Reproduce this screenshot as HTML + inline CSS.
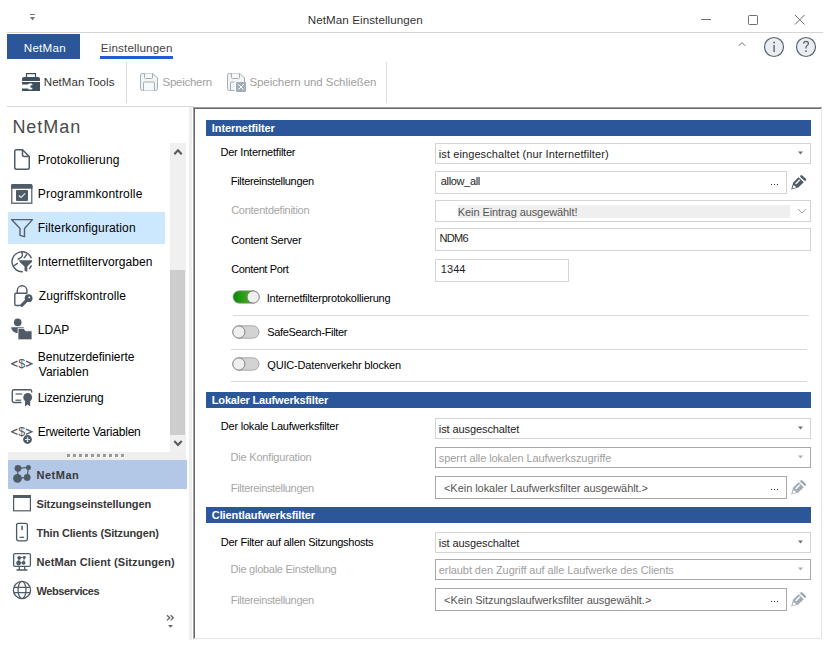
<!DOCTYPE html>
<html><head><meta charset="utf-8"><title>NetMan Einstellungen</title>
<style>
html,body{margin:0;padding:0;}
body{width:828px;height:647px;position:relative;overflow:hidden;background:#fff;font-family:"Liberation Sans", sans-serif;}
</style></head><body>
<svg style="position:absolute;left:29px;top:13px;" width="8" height="9" viewBox="0 0 8 9"><rect x="1" y="1" width="5" height="1" fill="#777"/><path d="M1 4 H6 L3.5 7.5 Z" fill="#777"/></svg>
<div style="position:absolute;left:307.80px;top:14px;font-size:11.6px;line-height:11.6px;font-weight:400;color:#333;letter-spacing:0.084px;white-space:nowrap;">NetMan Einstellungen</div>
<div style="position:absolute;left:701px;top:19px;width:10px;height:1px;background:#707070;"></div>
<svg style="position:absolute;left:747px;top:14px;" width="12" height="12" viewBox="0 0 12 12"><rect x="1.5" y="1.5" width="9" height="9" rx="0.8" fill="none" stroke="#707070" stroke-width="1"/></svg>
<svg style="position:absolute;left:794px;top:14px;" width="12" height="12" viewBox="0 0 12 12"><path d="M1 1 L10.5 10.5 M10.5 1 L1 10.5" stroke="#707070" stroke-width="1"/></svg>
<div style="position:absolute;left:7px;top:32px;width:816px;height:1px;background:#d5d5d5;"></div>
<div style="position:absolute;left:7px;top:34px;width:73px;height:25px;background:#2b579a;"></div>
<div style="position:absolute;left:23.80px;top:42px;font-size:11.6px;line-height:11.6px;font-weight:400;color:#fff;letter-spacing:0.240px;white-space:nowrap;">NetMan</div>
<div style="position:absolute;left:100.80px;top:42px;font-size:11.6px;line-height:11.6px;font-weight:400;color:#444;letter-spacing:0.167px;white-space:nowrap;">Einstellungen</div>
<div style="position:absolute;left:100px;top:56px;width:73px;height:3px;background:#1f5fcc;"></div>
<svg style="position:absolute;left:736px;top:40px;" width="12" height="8" viewBox="0 0 12 8"><path d="M2.8 5.8 L6 2.6 L9.2 5.8" fill="none" stroke="#707070" stroke-width="1"/></svg>
<svg style="position:absolute;left:763px;top:36px;" width="22" height="22" viewBox="0 0 22 22"><circle cx="11" cy="11" r="9.5" fill="#e9edf1" stroke="#5a6470" stroke-width="1.2"/><rect x="10.4" y="9" width="1.4" height="7" fill="#5a6470"/><circle cx="11.1" cy="6.5" r="0.9" fill="#5a6470"/></svg>
<svg style="position:absolute;left:795px;top:36px;" width="22" height="22" viewBox="0 0 22 22"><circle cx="11" cy="11" r="9.5" fill="#e9edf1" stroke="#5a6470" stroke-width="1.2"/><path d="M8.6 7.6 Q8.8 5.4 11 5.4 Q13.4 5.4 13.4 7.6 Q13.4 9 11.9 9.8 Q11 10.4 11 11.6 V12.6" fill="none" stroke="#5a6470" stroke-width="1.3"/><circle cx="11" cy="15.2" r="0.9" fill="#5a6470"/></svg>
<svg style="position:absolute;left:22px;top:73px;" width="18" height="18" viewBox="0 0 18 18"><path d="M4.5 4.5 V0.6 H13.5 V4.5" fill="none" stroke="#3d505c" stroke-width="1.2"/><path d="M0 8 V6 Q0 4 2 4 H16 Q18 4 18 6 V8 Z" fill="#3d505c"/><path d="M0 9 H18 V18 H0 V15.5 H5 Q6.5 15.5 7 16.5 H9.2 Q10.5 16.5 10.5 15 V14.7 H8.5 V12.3 H10.5 V12 Q10.5 10.5 9.2 10.5 H7 Q6.5 11.5 5 11.5 H0 Z" fill="#3d505c"/></svg>
<div style="position:absolute;left:43.80px;top:77px;font-size:11.5px;line-height:11.5px;font-weight:400;color:#333;letter-spacing:0.045px;white-space:nowrap;">NetMan Tools</div>
<div style="position:absolute;left:126px;top:62px;width:1px;height:41px;background:#dcdcdc;"></div>
<svg style="position:absolute;left:140px;top:73px;" width="18" height="18" viewBox="0 0 18 18"><path d="M0.5 2.5 Q0.5 0.5 2.5 0.5 H13 L17.5 5 V15.5 Q17.5 17.5 15.5 17.5 H2.5 Q0.5 17.5 0.5 15.5 Z" fill="#f3f4f5" stroke="#a3adb4" stroke-width="1"/><path d="M4.5 0.5 V4.5 Q4.5 5.5 5.5 5.5 H11.5 Q12.5 5.5 12.5 4.5 V0.5" fill="#f7f8f9" stroke="#a3adb4" stroke-width="1"/><path d="M3.5 17.5 V10 Q3.5 9 4.5 9 H13.5 Q14.5 9 14.5 10 V17.5" fill="#f7f8f9" stroke="#a3adb4" stroke-width="1"/></svg>
<div style="position:absolute;left:162.60px;top:77px;font-size:11.5px;line-height:11.5px;font-weight:400;color:#a0a0a0;letter-spacing:-0.287px;white-space:nowrap;">Speichern</div>
<svg style="position:absolute;left:227px;top:73px;" width="20" height="19" viewBox="0 0 20 19"><path d="M17.5 9.5 V5 L13 0.5 H2.5 Q0.5 0.5 0.5 2.5 V15.5 Q0.5 17.5 2.5 17.5 H7.5 V9 H17.5 Z" fill="#f3f4f5" stroke="none"/><path d="M17.5 9.5 V5 L13 0.5 H2.5 Q0.5 0.5 0.5 2.5 V15.5 Q0.5 17.5 2.5 17.5 H7.5" fill="none" stroke="#a3adb4" stroke-width="1"/><path d="M4.5 0.5 V4.5 Q4.5 5.5 5.5 5.5 H11.5 Q12.5 5.5 12.5 4.5 V0.5" fill="#f7f8f9" stroke="#a3adb4" stroke-width="1"/><path d="M3.5 17.5 V10 Q3.5 9 4.5 9 H7.5" fill="none" stroke="#a3adb4" stroke-width="1"/><rect x="9" y="9" width="10" height="10" rx="1.2" fill="#a3adb4"/><path d="M11.3 11.3 L16.7 16.7 M16.7 11.3 L11.3 16.7" stroke="#fff" stroke-width="1"/></svg>
<div style="position:absolute;left:249.40px;top:77px;font-size:11.5px;line-height:11.5px;font-weight:400;color:#a0a0a0;letter-spacing:-0.068px;white-space:nowrap;">Speichern und Schließen</div>
<div style="position:absolute;left:386px;top:62px;width:1px;height:41px;background:#dcdcdc;"></div>
<div style="position:absolute;left:7px;top:106px;width:187px;height:1px;background:#d8d8d8;"></div>
<div style="position:absolute;left:189px;top:107px;width:3px;height:533px;background:#eeeeee;"></div>
<div style="position:absolute;left:12.40px;top:118px;font-size:18px;line-height:18px;font-weight:400;color:#4a4a4a;letter-spacing:0.960px;white-space:nowrap;">NetMan</div>
<div style="position:absolute;left:170px;top:143px;width:16px;height:309px;background:#f0f0f0;"></div>
<div style="position:absolute;left:170px;top:270px;width:15px;height:165px;background:#cdcdcd;"></div>
<svg style="position:absolute;left:173px;top:147px;" width="10" height="9" viewBox="0 0 10 9"><path d="M1.3 7.2 L5 3.2 L8.7 7.2" fill="none" stroke="#5a5a5a" stroke-width="2.1"/></svg>
<svg style="position:absolute;left:173px;top:438px;" width="10" height="10" viewBox="0 0 10 10"><path d="M1.3 3 L5 7 L8.7 3" fill="none" stroke="#5a5a5a" stroke-width="2.1"/></svg>
<div style="position:absolute;left:8px;top:212px;width:157px;height:32px;background:#cce8ff;"></div>
<div style="position:absolute;left:37.80px;top:154px;font-size:12px;line-height:12px;font-weight:400;color:#000;letter-spacing:0.107px;white-space:nowrap;">Protokollierung</div>
<div style="position:absolute;left:37.80px;top:188px;font-size:12px;line-height:12px;font-weight:400;color:#000;letter-spacing:0.200px;white-space:nowrap;">Programmkontrolle</div>
<div style="position:absolute;left:37.80px;top:222px;font-size:12px;line-height:12px;font-weight:400;color:#000;letter-spacing:0.133px;white-space:nowrap;">Filterkonfiguration</div>
<div style="position:absolute;left:37.80px;top:256px;font-size:12px;line-height:12px;font-weight:400;color:#000;letter-spacing:0.057px;white-space:nowrap;">Internetfiltervorgaben</div>
<div style="position:absolute;left:38.80px;top:290px;font-size:12px;line-height:12px;font-weight:400;color:#000;letter-spacing:0.125px;white-space:nowrap;">Zugriffskontrolle</div>
<div style="position:absolute;left:37.80px;top:324px;font-size:12px;line-height:12px;font-weight:400;color:#000;letter-spacing:0.000px;white-space:nowrap;">LDAP</div>
<div style="position:absolute;left:37.80px;top:351px;font-size:12px;line-height:12px;font-weight:400;color:#000;letter-spacing:-0.047px;white-space:nowrap;">Benutzerdefinierte</div>
<div style="position:absolute;left:38.80px;top:366px;font-size:12px;line-height:12px;font-weight:400;color:#000;letter-spacing:0.000px;white-space:nowrap;">Variablen</div>
<div style="position:absolute;left:37.80px;top:392px;font-size:12px;line-height:12px;font-weight:400;color:#000;letter-spacing:-0.200px;white-space:nowrap;">Lizenzierung</div>
<div style="position:absolute;left:37.80px;top:426px;font-size:12px;line-height:12px;font-weight:400;color:#000;letter-spacing:-0.221px;white-space:nowrap;">Erweiterte Variablen</div>
<svg style="position:absolute;left:13px;top:148px;" width="18" height="23" viewBox="0 0 18 23"><path d="M1.75 3.5 Q1.75 1.75 3.5 1.75 H9.5 L16.25 8.5 V19.5 Q16.25 21.25 14.5 21.25 H3.5 Q1.75 21.25 1.75 19.5 Z" fill="none" stroke="#4f5b66" stroke-width="1.5"/><path d="M9.5 1.75 V6.75 Q9.5 8.5 11.25 8.5 H16.25" fill="none" stroke="#4f5b66" stroke-width="1.5"/></svg>
<svg style="position:absolute;left:11px;top:184px;" width="22" height="20" viewBox="0 0 22 20"><path d="M0.75 19.25 V2 Q0.75 0.5 2.5 0.5 H19 Q20.75 0.5 20.75 2 V19.25 Z" fill="none" stroke="#6a747c" stroke-width="1.4"/><path d="M0 2 Q0 0 2 0 H19.5 Q21.5 0 21.5 2 V4.8 H0 Z" fill="#4f5b66"/><rect x="5" y="6" width="12" height="11" rx="1" fill="#4f5b66"/><path d="M7.8 11.5 L10 13.5 L14.2 9.3" fill="none" stroke="#e6e8ea" stroke-width="1.2"/></svg>
<svg style="position:absolute;left:10px;top:218px;" width="24" height="21" viewBox="0 0 24 21"><path d="M1.5 1.6 H22.5 L14.5 10.5 V18.7 L10 17.3 V10.5 Z" fill="none" stroke="#55606a" stroke-width="1.4" stroke-linejoin="round"/></svg>
<svg style="position:absolute;left:8px;top:247px;" width="28" height="30" viewBox="0 0 28 30"><path d="M23.4 11.3 A10 10 0 1 0 14.8 24.7" fill="none" stroke="#4f5b66" stroke-width="1.4"/><path d="M13.5 5.2 Q15.3 8 13.6 10 Q12 11.6 9.6 12.5" fill="none" stroke="#4f5b66" stroke-width="1.4"/><path d="M19 7.2 L15.8 11.1" stroke="#4f5b66" stroke-width="1.4"/><path d="M9.8 16.2 L5.6 19" stroke="#4f5b66" stroke-width="1.4"/><path d="M11.1 13.2 H24.1 V14.8 L19.3 19.4 V24.9 L16.5 23.6 V19.4 L11.4 14.8 Z" fill="#4f5b66"/><path d="M21.3 21.8 L23.6 18.5" stroke="#4f5b66" stroke-width="1.4"/></svg>
<svg style="position:absolute;left:13px;top:284px;" width="22" height="24" viewBox="0 0 22 24"><path d="M4.3 9.4 V6.6 A4.8 4.8 0 0 1 13.9 6.6 V9.4" fill="none" stroke="#4f5b66" stroke-width="1.4"/><path d="M8.5 21.5 H3 Q1.8 21.5 1.8 20.3 V10.5 Q1.8 9.3 3 9.3 H14" fill="none" stroke="#4f5b66" stroke-width="1.4"/><circle cx="15.6" cy="14.2" r="3.9" fill="#4f5b66"/><path d="M13.5 16.5 L9 21.2" stroke="#4f5b66" stroke-width="3.2" stroke-linecap="round"/><circle cx="16.3" cy="13.4" r="0.9" fill="#fff"/></svg>
<svg style="position:absolute;left:10px;top:318px;" width="24" height="24" viewBox="0 0 24 24"><circle cx="7.7" cy="4.4" r="3.8" fill="#4f5b66"/><path d="M1.2 9.2 H13.8 V12.8 H10 V15 Q8 15.2 7.3 15.2 A6.5 6 0 0 1 1.2 9.2 Z" fill="#4f5b66"/><path d="M8 10.4 H14 L15.5 12.8 H22 V21.8 H8 Z" fill="#4f5b66" stroke="#fff" stroke-width="0.8"/></svg>
<svg style="position:absolute;left:11px;top:351px;" width="22" height="22" viewBox="0 0 22 22"><path d="M6.5 10.2 L0.6 12.8 L6.5 15.4 M15 10.2 L20.9 12.8 L15 15.4" fill="none" stroke="#555d66" stroke-width="1.3"/><text x="10.75" y="17" text-anchor="middle" font-family="Liberation Sans" font-size="12.5" fill="#555d66">$</text></svg>
<svg style="position:absolute;left:11px;top:388px;" width="22" height="22" viewBox="0 0 22 22"><path d="M10.5 14.5 H3 Q1.3 14.5 1.3 12.8 V3.5 Q1.3 1.8 3 1.8 H19 Q20.7 1.8 20.7 3.5 V4.5" fill="none" stroke="#4f5b66" stroke-width="1.4"/><rect x="4.5" y="5.4" width="6.6" height="1.2" fill="#4f5b66"/><rect x="4.5" y="11.6" width="5.6" height="1.2" fill="#4f5b66"/><circle cx="16.7" cy="9.4" r="4.4" fill="#4f5b66"/><path d="M14 13 V18.5 L16.6 16.5 L19.2 18.5 V13 Z" fill="#4f5b66"/></svg>
<svg style="position:absolute;left:11px;top:419px;" width="22" height="26" viewBox="0 0 22 26"><path d="M6.5 10.2 L0.6 12.8 L6.5 15.4 M15 10.2 L20.9 12.8 L15 15.4" fill="none" stroke="#555d66" stroke-width="1.3"/><text x="10.75" y="17" text-anchor="middle" font-family="Liberation Sans" font-size="12.5" fill="#555d66">$</text><circle cx="16.5" cy="20.5" r="4.4" fill="#4f5b66"/><path d="M16.5 18 V23 M14 20.5 H19" stroke="#e0e3e6" stroke-width="1.2"/></svg>
<div style="position:absolute;left:8px;top:452px;width:178px;height:8px;background:#eeeeee;"></div>
<div style="position:absolute;left:68px;top:455px;width:3px;height:3px;background:#ffffff;"></div>
<div style="position:absolute;left:67px;top:454px;width:3px;height:3px;background:#999999;"></div>
<div style="position:absolute;left:74px;top:455px;width:3px;height:3px;background:#ffffff;"></div>
<div style="position:absolute;left:73px;top:454px;width:3px;height:3px;background:#999999;"></div>
<div style="position:absolute;left:80px;top:455px;width:3px;height:3px;background:#ffffff;"></div>
<div style="position:absolute;left:79px;top:454px;width:3px;height:3px;background:#999999;"></div>
<div style="position:absolute;left:86px;top:455px;width:3px;height:3px;background:#ffffff;"></div>
<div style="position:absolute;left:85px;top:454px;width:3px;height:3px;background:#999999;"></div>
<div style="position:absolute;left:92px;top:455px;width:3px;height:3px;background:#ffffff;"></div>
<div style="position:absolute;left:91px;top:454px;width:3px;height:3px;background:#999999;"></div>
<div style="position:absolute;left:98px;top:455px;width:3px;height:3px;background:#ffffff;"></div>
<div style="position:absolute;left:97px;top:454px;width:3px;height:3px;background:#999999;"></div>
<div style="position:absolute;left:104px;top:455px;width:3px;height:3px;background:#ffffff;"></div>
<div style="position:absolute;left:103px;top:454px;width:3px;height:3px;background:#999999;"></div>
<div style="position:absolute;left:110px;top:455px;width:3px;height:3px;background:#ffffff;"></div>
<div style="position:absolute;left:109px;top:454px;width:3px;height:3px;background:#999999;"></div>
<div style="position:absolute;left:116px;top:455px;width:3px;height:3px;background:#ffffff;"></div>
<div style="position:absolute;left:115px;top:454px;width:3px;height:3px;background:#999999;"></div>
<div style="position:absolute;left:122px;top:455px;width:3px;height:3px;background:#ffffff;"></div>
<div style="position:absolute;left:121px;top:454px;width:3px;height:3px;background:#999999;"></div>
<div style="position:absolute;left:8px;top:460px;width:179px;height:29px;background:#b3c8e6;"></div>
<svg style="position:absolute;left:11px;top:462px;" width="24" height="24" viewBox="0 0 24 24"><path d="M7 6.3 L17.4 5.4 L16.2 15.4 L6.5 16.3 Z" fill="none" stroke="#4f5b66" stroke-width="1.2"/><circle cx="7" cy="6.3" r="3.4" fill="#4f5b66"/><circle cx="17.4" cy="5.4" r="2.5" fill="#4f5b66"/><circle cx="6.5" cy="16.3" r="4.4" fill="#4f5b66"/><circle cx="16.2" cy="15.4" r="3.4" fill="#4f5b66"/></svg>
<div style="position:absolute;left:36.60px;top:470px;font-size:11px;line-height:11px;font-weight:700;color:#383838;letter-spacing:0.480px;white-space:nowrap;">NetMan</div>
<svg style="position:absolute;left:12px;top:494px;" width="20" height="18" viewBox="0 0 20 18"><rect x="1.6" y="1.6" width="16.8" height="15.2" fill="none" stroke="#4f5b66" stroke-width="1.2"/><rect x="1" y="1" width="18" height="3" fill="#4f5b66"/></svg>
<div style="position:absolute;left:36.40px;top:499px;font-size:11px;line-height:11px;font-weight:700;color:#383838;letter-spacing:-0.100px;white-space:nowrap;">Sitzungseinstellungen</div>
<svg style="position:absolute;left:15px;top:522px;" width="14" height="20" viewBox="0 0 14 20"><rect x="1.6" y="1.3" width="10.8" height="17.5" rx="1.8" fill="none" stroke="#4a5a66" stroke-width="1.3"/><rect x="6.3" y="3.7" width="1.5" height="4.3" fill="#4a5a66"/><rect x="4.6" y="14.7" width="4.5" height="1.2" fill="#4a5a66"/></svg>
<div style="position:absolute;left:36.40px;top:528px;font-size:11px;line-height:11px;font-weight:700;color:#383838;letter-spacing:-0.148px;white-space:nowrap;">Thin Clients (Sitzungen)</div>
<svg style="position:absolute;left:12px;top:552px;" width="20" height="20" viewBox="0 0 20 20"><rect x="1.6" y="1.6" width="16.8" height="12.8" rx="1.5" fill="none" stroke="#4f5b66" stroke-width="1.3"/><path d="M7.3 15 V17.6 M12.7 15 V17.6 M4.5 18 H15.5" stroke="#4f5b66" stroke-width="1.3"/><path d="M7.2 5.8 L12.3 5.5 L11.6 10.8 L6.6 11 Z" fill="none" stroke="#4f5b66" stroke-width="0.9"/><circle cx="7.2" cy="5.8" r="1.9" fill="#4f5b66"/><circle cx="12.3" cy="5.5" r="1.4" fill="#4f5b66"/><circle cx="6.6" cy="11" r="2.4" fill="#4f5b66"/><circle cx="11.6" cy="10.8" r="1.9" fill="#4f5b66"/></svg>
<div style="position:absolute;left:36.40px;top:557px;font-size:11px;line-height:11px;font-weight:700;color:#383838;letter-spacing:0.087px;white-space:nowrap;">NetMan Client (Sitzungen)</div>
<svg style="position:absolute;left:12px;top:580px;" width="20" height="20" viewBox="0 0 20 20"><circle cx="10" cy="10" r="8.6" fill="none" stroke="#4f5b66" stroke-width="1.3"/><ellipse cx="10" cy="10" rx="4" ry="8.6" fill="none" stroke="#4f5b66" stroke-width="1.3"/><path d="M1.8 7.3 H18.2 M1.8 12.7 H18.2" stroke="#4f5b66" stroke-width="1.3"/></svg>
<div style="position:absolute;left:36.40px;top:586px;font-size:11px;line-height:11px;font-weight:700;color:#383838;letter-spacing:-0.380px;white-space:nowrap;">Webservices</div>
<svg style="position:absolute;left:165px;top:612px;" width="12" height="18" viewBox="0 0 12 18"><path d="M2 3.2 L4.7 5.8 L2 8.4 M5.6 3.2 L8.3 5.8 L5.6 8.4" fill="none" stroke="#606060" stroke-width="1.3"/><path d="M3 13 H8 L5.5 15.8 Z" fill="#666"/></svg>
<div style="position:absolute;left:193px;top:107px;width:630px;height:533px;background:#ffffff;"></div>
<div style="position:absolute;left:193px;top:107px;width:629px;height:1px;background:#a0a0a0;"></div>
<div style="position:absolute;left:193px;top:107px;width:1px;height:532px;background:#a0a0a0;"></div>
<div style="position:absolute;left:194px;top:108px;width:627px;height:1px;background:#696969;"></div>
<div style="position:absolute;left:194px;top:108px;width:1px;height:530px;background:#696969;"></div>
<div style="position:absolute;left:821px;top:108px;width:1px;height:531px;background:#e3e3e3;"></div>
<div style="position:absolute;left:194px;top:638px;width:628px;height:1px;background:#e3e3e3;"></div>
<div style="position:absolute;left:206px;top:120px;width:605px;height:16px;background:#2b579a;"></div>
<div style="position:absolute;left:211.80px;top:123px;font-size:11px;line-height:11px;font-weight:700;color:#fff;letter-spacing:-0.085px;white-space:nowrap;">Internetfilter</div>
<div style="position:absolute;left:220.50px;top:147px;font-size:11px;line-height:11px;font-weight:400;color:#000;letter-spacing:-0.229px;white-space:nowrap;">Der Internetfilter</div>
<div style="position:absolute;left:435px;top:143px;width:374px;height:19px;border:1px solid #d4d4d4;background:#fff;"></div>
<div style="position:absolute;left:438.80px;top:149px;font-size:11px;line-height:11px;font-weight:400;color:#1e1e1e;letter-spacing:0.095px;white-space:nowrap;">ist eingeschaltet (nur Internetfilter)</div>
<svg style="position:absolute;left:797px;top:151px;" width="7" height="4" viewBox="0 0 7 4"><path d="M1 0.5 H6 L3.5 3.5 Z" fill="#707070"/></svg>
<div style="position:absolute;left:230.80px;top:176px;font-size:11px;line-height:11px;font-weight:400;color:#000;letter-spacing:-0.333px;white-space:nowrap;">Filtereinstellungen</div>
<div style="position:absolute;left:435px;top:171px;width:350px;height:21px;border:1px solid #d4d4d4;background:#fff;"></div>
<div style="position:absolute;left:440.80px;top:176px;font-size:11px;line-height:11px;font-weight:400;color:#1e1e1e;letter-spacing:-0.350px;white-space:nowrap;">allow_all</div>
<div style="position:absolute;left:771px;top:184px;width:1px;height:1px;background:#333;"></div>
<div style="position:absolute;left:774px;top:184px;width:1px;height:1px;background:#333;"></div>
<div style="position:absolute;left:777px;top:184px;width:1px;height:1px;background:#333;"></div>
<svg style="position:absolute;left:786px;top:170px;" width="24" height="24" viewBox="0 0 24 24"><path d="M15.4 6.3 L19 9.7" stroke="#4f5b66" stroke-width="2.5" stroke-linecap="round"/><path d="M12.6 7.2 L17.8 12.2 L12.2 17.4 L5.2 19.6 L7.2 12.6 Z" fill="#4f5b66"/><path d="M13.8 9.8 L9.6 14" stroke="#fff" stroke-width="1.3"/><path d="M7.6 15 L10.4 17.3 L6.4 18.4 Z" fill="#fff"/></svg>
<div style="position:absolute;left:231.20px;top:205px;font-size:11px;line-height:11px;font-weight:400;color:#a6a6a6;letter-spacing:-0.262px;white-space:nowrap;">Contentdefinition</div>
<div style="position:absolute;left:435px;top:200px;width:374px;height:20px;border:1px solid #d4d4d4;background:#fff;"></div>
<div style="position:absolute;left:458px;top:205px;width:332px;height:13px;background:#efefef;"></div>
<div style="position:absolute;left:457.80px;top:207px;font-size:11px;line-height:11px;font-weight:400;color:#555;letter-spacing:-0.087px;white-space:nowrap;">Kein Eintrag ausgewählt!</div>
<svg style="position:absolute;left:797px;top:208px;" width="10" height="7" viewBox="0 0 10 7"><path d="M1 1 L5 5 L9 1" fill="none" stroke="#a0a0a0" stroke-width="1"/></svg>
<div style="position:absolute;left:231.20px;top:235px;font-size:11px;line-height:11px;font-weight:400;color:#000;letter-spacing:-0.277px;white-space:nowrap;">Content Server</div>
<div style="position:absolute;left:435px;top:228px;width:374px;height:21px;border:1px solid #d4d4d4;background:#fff;"></div>
<div style="position:absolute;left:439.60px;top:233px;font-size:11px;line-height:11px;font-weight:400;color:#1e1e1e;letter-spacing:-0.700px;white-space:nowrap;">NDM6</div>
<div style="position:absolute;left:231.20px;top:264px;font-size:11px;line-height:11px;font-weight:400;color:#000;letter-spacing:-0.382px;white-space:nowrap;">Content Port</div>
<div style="position:absolute;left:435px;top:259px;width:132px;height:21px;border:1px solid #d4d4d4;background:#fff;"></div>
<div style="position:absolute;left:440.80px;top:264px;font-size:11px;line-height:11px;font-weight:400;color:#1e1e1e;letter-spacing:0.067px;white-space:nowrap;">1344</div>
<svg style="position:absolute;left:232px;top:290px;" width="28" height="14" viewBox="0 0 28 14"><defs><linearGradient id="g" x1="0" x2="1"><stop offset="0" stop-color="#078a07"/><stop offset="1" stop-color="#66bb2a"/></linearGradient></defs><rect x="1" y="0.8" width="26" height="12.4" rx="6.2" fill="url(#g)" stroke="#9a9a9a" stroke-width="0.8"/><circle cx="21.2" cy="7" r="6.1" fill="#efefef" stroke="#7d7d7d" stroke-width="0.9"/></svg>
<div style="position:absolute;left:266.80px;top:293px;font-size:11px;line-height:11px;font-weight:400;color:#000;letter-spacing:-0.229px;white-space:nowrap;">Internetfilterprotokollierung</div>
<div style="position:absolute;left:233px;top:315px;width:576px;height:1px;background:#d9d9d9;"></div>
<svg style="position:absolute;left:232px;top:325px;" width="28" height="14" viewBox="0 0 28 14"><rect x="1" y="0.8" width="26" height="12.4" rx="6.2" fill="#d3d3d3" stroke="#9a9a9a" stroke-width="0.8"/><circle cx="6.8" cy="7" r="6.1" fill="#efefef" stroke="#7d7d7d" stroke-width="0.9"/></svg>
<div style="position:absolute;left:267.30px;top:327px;font-size:11px;line-height:11px;font-weight:400;color:#000;letter-spacing:-0.338px;white-space:nowrap;">SafeSearch-Filter</div>
<div style="position:absolute;left:231px;top:349px;width:576px;height:1px;background:#d9d9d9;"></div>
<svg style="position:absolute;left:232px;top:357px;" width="28" height="14" viewBox="0 0 28 14"><rect x="1" y="0.8" width="26" height="12.4" rx="6.2" fill="#d3d3d3" stroke="#9a9a9a" stroke-width="0.8"/><circle cx="6.8" cy="7" r="6.1" fill="#efefef" stroke="#7d7d7d" stroke-width="0.9"/></svg>
<div style="position:absolute;left:267.30px;top:360px;font-size:11px;line-height:11px;font-weight:400;color:#000;letter-spacing:-0.179px;white-space:nowrap;">QUIC-Datenverkehr blocken</div>
<div style="position:absolute;left:231px;top:381px;width:576px;height:1px;background:#d9d9d9;"></div>
<div style="position:absolute;left:206px;top:392px;width:605px;height:16px;background:#2b579a;"></div>
<div style="position:absolute;left:211.80px;top:395px;font-size:11px;line-height:11px;font-weight:700;color:#fff;letter-spacing:-0.177px;white-space:nowrap;">Lokaler Laufwerksfilter</div>
<div style="position:absolute;left:220.80px;top:421px;font-size:11px;line-height:11px;font-weight:400;color:#000;letter-spacing:-0.216px;white-space:nowrap;">Der lokale Laufwerksfilter</div>
<div style="position:absolute;left:435px;top:418px;width:374px;height:19px;border:1px solid #d4d4d4;background:#fff;"></div>
<div style="position:absolute;left:438.80px;top:424px;font-size:11px;line-height:11px;font-weight:400;color:#1e1e1e;letter-spacing:-0.094px;white-space:nowrap;">ist ausgeschaltet</div>
<svg style="position:absolute;left:797px;top:426px;" width="7" height="4" viewBox="0 0 7 4"><path d="M1 0.5 H6 L3.5 3.5 Z" fill="#707070"/></svg>
<div style="position:absolute;left:230.60px;top:452px;font-size:11px;line-height:11px;font-weight:400;color:#a6a6a6;letter-spacing:-0.206px;white-space:nowrap;">Die Konfiguration</div>
<div style="position:absolute;left:435px;top:447px;width:374px;height:19px;border:1px solid #a8a8a8;background:#fff;"></div>
<div style="position:absolute;left:438.80px;top:453px;font-size:11px;line-height:11px;font-weight:400;color:#a0a0a0;letter-spacing:-0.078px;white-space:nowrap;">sperrt alle lokalen Laufwerkszugriffe</div>
<svg style="position:absolute;left:797px;top:455px;" width="7" height="4" viewBox="0 0 7 4"><path d="M1 0.5 H6 L3.5 3.5 Z" fill="#b0b0b0"/></svg>
<div style="position:absolute;left:230.80px;top:483px;font-size:11px;line-height:11px;font-weight:400;color:#a6a6a6;letter-spacing:-0.333px;white-space:nowrap;">Filtereinstellungen</div>
<div style="position:absolute;left:435px;top:476px;width:350px;height:21px;border:1px solid #a8a8a8;background:#fff;"></div>
<div style="position:absolute;left:444.00px;top:483px;font-size:11px;line-height:11px;font-weight:400;color:#555;letter-spacing:-0.049px;white-space:nowrap;">&lt;Kein lokaler Laufwerksfilter ausgewählt.&gt;</div>
<div style="position:absolute;left:771px;top:489px;width:1px;height:1px;background:#333;"></div>
<div style="position:absolute;left:774px;top:489px;width:1px;height:1px;background:#333;"></div>
<div style="position:absolute;left:777px;top:489px;width:1px;height:1px;background:#333;"></div>
<svg style="position:absolute;left:786px;top:475px;" width="24" height="24" viewBox="0 0 24 24"><path d="M15.4 6.3 L19 9.7" stroke="#a3abb2" stroke-width="2.5" stroke-linecap="round"/><path d="M12.6 7.2 L17.8 12.2 L12.2 17.4 L5.2 19.6 L7.2 12.6 Z" fill="#a3abb2"/><path d="M13.8 9.8 L9.6 14" stroke="#fff" stroke-width="1.3"/><path d="M7.6 15 L10.4 17.3 L6.4 18.4 Z" fill="#fff"/></svg>
<div style="position:absolute;left:206px;top:507px;width:605px;height:16px;background:#2b579a;"></div>
<div style="position:absolute;left:211.80px;top:510px;font-size:11px;line-height:11px;font-weight:700;color:#fff;letter-spacing:-0.090px;white-space:nowrap;">Clientlaufwerksfilter</div>
<div style="position:absolute;left:220.80px;top:537px;font-size:11px;line-height:11px;font-weight:400;color:#000;letter-spacing:-0.261px;white-space:nowrap;">Der Filter auf allen Sitzungshosts</div>
<div style="position:absolute;left:435px;top:532px;width:374px;height:19px;border:1px solid #d4d4d4;background:#fff;"></div>
<div style="position:absolute;left:438.80px;top:538px;font-size:11px;line-height:11px;font-weight:400;color:#1e1e1e;letter-spacing:-0.094px;white-space:nowrap;">ist ausgeschaltet</div>
<svg style="position:absolute;left:797px;top:540px;" width="7" height="4" viewBox="0 0 7 4"><path d="M1 0.5 H6 L3.5 3.5 Z" fill="#707070"/></svg>
<div style="position:absolute;left:230.60px;top:564px;font-size:11px;line-height:11px;font-weight:400;color:#a6a6a6;letter-spacing:-0.264px;white-space:nowrap;">Die globale Einstellung</div>
<div style="position:absolute;left:435px;top:559px;width:374px;height:19px;border:1px solid #a8a8a8;background:#fff;"></div>
<div style="position:absolute;left:438.80px;top:565px;font-size:11px;line-height:11px;font-weight:400;color:#a0a0a0;letter-spacing:-0.078px;white-space:nowrap;">erlaubt den Zugriff auf alle Laufwerke des Clients</div>
<svg style="position:absolute;left:797px;top:567px;" width="7" height="4" viewBox="0 0 7 4"><path d="M1 0.5 H6 L3.5 3.5 Z" fill="#b0b0b0"/></svg>
<div style="position:absolute;left:230.80px;top:595px;font-size:11px;line-height:11px;font-weight:400;color:#a6a6a6;letter-spacing:-0.333px;white-space:nowrap;">Filtereinstellungen</div>
<div style="position:absolute;left:435px;top:588px;width:350px;height:21px;border:1px solid #a8a8a8;background:#fff;"></div>
<div style="position:absolute;left:444.00px;top:595px;font-size:11px;line-height:11px;font-weight:400;color:#555;letter-spacing:-0.044px;white-space:nowrap;">&lt;Kein Sitzungslaufwerksfilter ausgewählt.&gt;</div>
<div style="position:absolute;left:771px;top:601px;width:1px;height:1px;background:#333;"></div>
<div style="position:absolute;left:774px;top:601px;width:1px;height:1px;background:#333;"></div>
<div style="position:absolute;left:777px;top:601px;width:1px;height:1px;background:#333;"></div>
<svg style="position:absolute;left:786px;top:587px;" width="24" height="24" viewBox="0 0 24 24"><path d="M15.4 6.3 L19 9.7" stroke="#a3abb2" stroke-width="2.5" stroke-linecap="round"/><path d="M12.6 7.2 L17.8 12.2 L12.2 17.4 L5.2 19.6 L7.2 12.6 Z" fill="#a3abb2"/><path d="M13.8 9.8 L9.6 14" stroke="#fff" stroke-width="1.3"/><path d="M7.6 15 L10.4 17.3 L6.4 18.4 Z" fill="#fff"/></svg>
</body></html>
